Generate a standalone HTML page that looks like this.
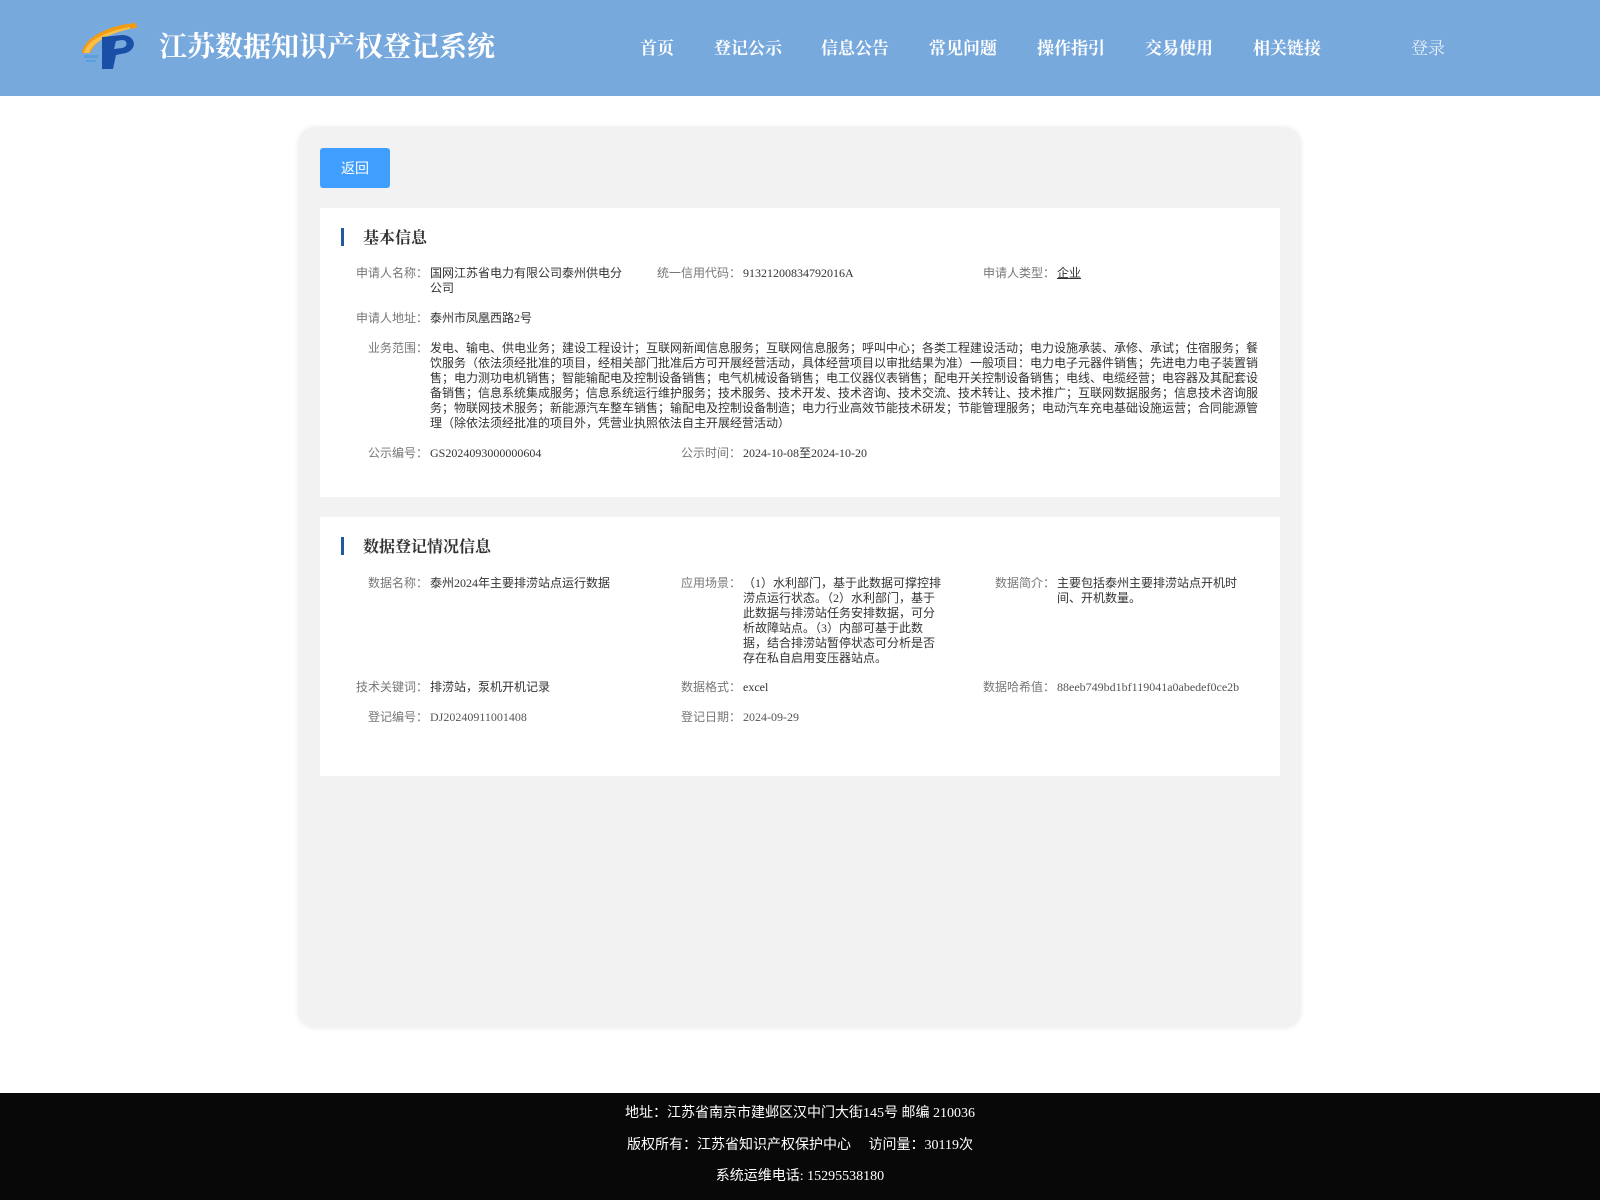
<!DOCTYPE html>
<html><head><meta charset="utf-8">
<style>
*{margin:0;padding:0;box-sizing:border-box}
body{width:1600px;height:1200px;position:relative;background:#fff;font-family:"Liberation Serif","Noto Sans CJK SC",serif;overflow:hidden}
.hd{position:absolute;left:0;top:0;width:1600px;height:96px;background:#78a9dd}
.title{position:absolute;left:159px;top:27px;font-size:28px;color:#fff;font-weight:bold;font-family:"Noto Serif CJK SC","Liberation Serif",serif;letter-spacing:0px;line-height:36px}
.nav{position:absolute;top:36px;font-size:17px;color:#fff;font-weight:bold;line-height:22px;font-family:"Noto Serif CJK SC",serif}
.login{position:absolute;left:1411px;top:36px;font-size:17px;color:#e6eef8;line-height:22px;font-family:"Noto Serif CJK SC",serif}
.card{position:absolute;left:299px;top:128px;width:1001px;height:899px;background:#f2f2f2;border-radius:16px;box-shadow:0 0 6px rgba(0,0,0,.12)}
.btn{position:absolute;left:320px;top:148px;width:70px;height:40px;background:#409eff;border-radius:3px;color:#fff;font-size:14px;line-height:40px;text-align:center;font-family:"Noto Sans CJK SC",sans-serif}
.sec{position:absolute;left:320px;width:960px;background:#fff}
.bar{position:absolute;left:341px;width:3px;height:18px;background:#1f5aa0}
.st{position:absolute;left:363px;font-size:16px;font-weight:bold;color:#333;line-height:20px;font-family:"Noto Serif CJK SC",serif}
.l{position:absolute;font-size:12px;line-height:15px;color:#777;text-align:right;white-space:nowrap}
.v{position:absolute;font-size:12px;line-height:15px;color:#333}
.ft{position:absolute;left:0;top:1093px;width:1600px;height:107px;background:#080808;color:#fff;font-size:14px;text-align:center}
.ft div{position:absolute;left:0;width:1600px;line-height:20px}
</style></head><body>
<div class="hd">
<svg style="position:absolute;left:80px;top:19px" width="60" height="52" viewBox="0 0 60 52">
<path d="M2 34 C4 18 30 6 56 4 L57 9 C36 10 16 20 10 34 Z" fill="#f39c12"/>
<path d="M4 34 C6 22 26 12 50 8 L50 10 C30 14 12 24 9 34Z" fill="#f7c04a"/>
<path d="M22 18 L42 16 C56 16 58 30 46 34 L36 36 L33 50 L22 50 Z M36 22 L34 30 L42 29 C48 28 48 21 42 21Z" fill="#1a4fa8"/>
<rect x="4" y="36" width="14" height="3" fill="#5aa0e0"/><rect x="6" y="41" width="10" height="2" fill="#5aa0e0"/>
</svg>
<div class="title">江苏数据知识产权登记系统</div>
<div class="nav" style="left:640px">首页</div>
<div class="nav" style="left:714px">登记公示</div>
<div class="nav" style="left:821px">信息公告</div>
<div class="nav" style="left:929px">常见问题</div>
<div class="nav" style="left:1037px">操作指引</div>
<div class="nav" style="left:1145px">交易使用</div>
<div class="nav" style="left:1253px">相关链接</div>
<div class="login">登录</div>
</div>
<div class="card"></div>
<div class="btn">返回</div>
<div class="sec" style="top:208px;height:289px"></div>
<div class="sec" style="top:517px;height:259px"></div>
<div class="bar" style="top:228px"></div><div class="st" style="top:227px">基本信息</div>
<div class="bar" style="top:537px"></div><div class="st" style="top:536px">数据登记情况信息</div>

<div class="l" style="right:1172px;top:266px">申请人名称：</div>
<div class="v" style="left:430px;top:266px;width:196px">国网江苏省电力有限公司泰州供电分公司</div>
<div class="l" style="right:859px;top:266px">统一信用代码：</div>
<div class="v" style="left:743px;top:266px">91321200834792016A</div>
<div class="l" style="right:545px;top:266px">申请人类型：</div>
<div class="v" style="left:1057px;top:266px;text-decoration:underline">企业</div>
<div class="l" style="right:1172px;top:311px">申请人地址：</div>
<div class="v" style="left:430px;top:311px">泰州市凤凰西路2号</div>
<div class="l" style="right:1172px;top:341px">业务范围：</div>
<div class="v" style="left:430px;top:341px;width:832px">发电、输电、供电业务；建设工程设计；互联网新闻信息服务；互联网信息服务；呼叫中心；各类工程建设活动；电力设施承装、承修、承试；住宿服务；餐饮服务（依法须经批准的项目，经相关部门批准后方可开展经营活动，具体经营项目以审批结果为准）一般项目：电力电子元器件销售；先进电力电子装置销售；电力测功电机销售；智能输配电及控制设备销售；电气机械设备销售；电工仪器仪表销售；配电开关控制设备销售；电线、电缆经营；电容器及其配套设备销售；信息系统集成服务；信息系统运行维护服务；技术服务、技术开发、技术咨询、技术交流、技术转让、技术推广；互联网数据服务；信息技术咨询服务；物联网技术服务；新能源汽车整车销售；输配电及控制设备制造；电力行业高效节能技术研发；节能管理服务；电动汽车充电基础设施运营；合同能源管理（除依法须经批准的项目外，凭营业执照依法自主开展经营活动）</div>
<div class="l" style="right:1172px;top:446px">公示编号：</div>
<div class="v" style="left:430px;top:446px">GS2024093000000604</div>
<div class="l" style="right:859px;top:446px">公示时间：</div>
<div class="v" style="left:743px;top:446px">2024-10-08至2024-10-20</div>

<div class="l" style="right:1172px;top:576px">数据名称：</div>
<div class="v" style="left:430px;top:576px">泰州2024年主要排涝站点运行数据</div>
<div class="l" style="right:859px;top:576px">应用场景：</div>
<div class="v" style="left:743px;top:576px;width:202px">（1）水利部门，基于此数据可撑控排涝点运行状态。（2）水利部门，基于此数据与排涝站任务安排数据，可分析故障站点。（3）内部可基于此数据，结合排涝站暂停状态可分析是否存在私自启用变压器站点。</div>
<div class="l" style="right:545px;top:576px">数据简介：</div>
<div class="v" style="left:1057px;top:576px;width:184px">主要包括泰州主要排涝站点开机时间、开机数量。</div>
<div class="l" style="right:1172px;top:680px">技术关键词：</div>
<div class="v" style="left:430px;top:680px">排涝站，泵机开机记录</div>
<div class="l" style="right:859px;top:680px">数据格式：</div>
<div class="v" style="left:743px;top:680px">excel</div>
<div class="l" style="right:545px;top:680px">数据哈希值：</div>
<div class="v" style="left:1057px;top:680px;color:#555">88eeb749bd1bf119041a0abedef0ce2b</div>
<div class="l" style="right:1172px;top:710px">登记编号：</div>
<div class="v" style="left:430px;top:710px;color:#555">DJ20240911001408</div>
<div class="l" style="right:859px;top:710px">登记日期：</div>
<div class="v" style="left:743px;top:710px;color:#555">2024-09-29</div>

<div class="ft">
<div style="top:11px">地址：江苏省南京市建邺区汉中门大街145号 邮编 210036</div>
<div style="top:43px">版权所有：江苏省知识产权保护中心&nbsp;&nbsp;&nbsp;&nbsp;&nbsp;访问量：30119次</div>
<div style="top:74px">系统运维电话: 15295538180</div>
</div>
</body></html>
